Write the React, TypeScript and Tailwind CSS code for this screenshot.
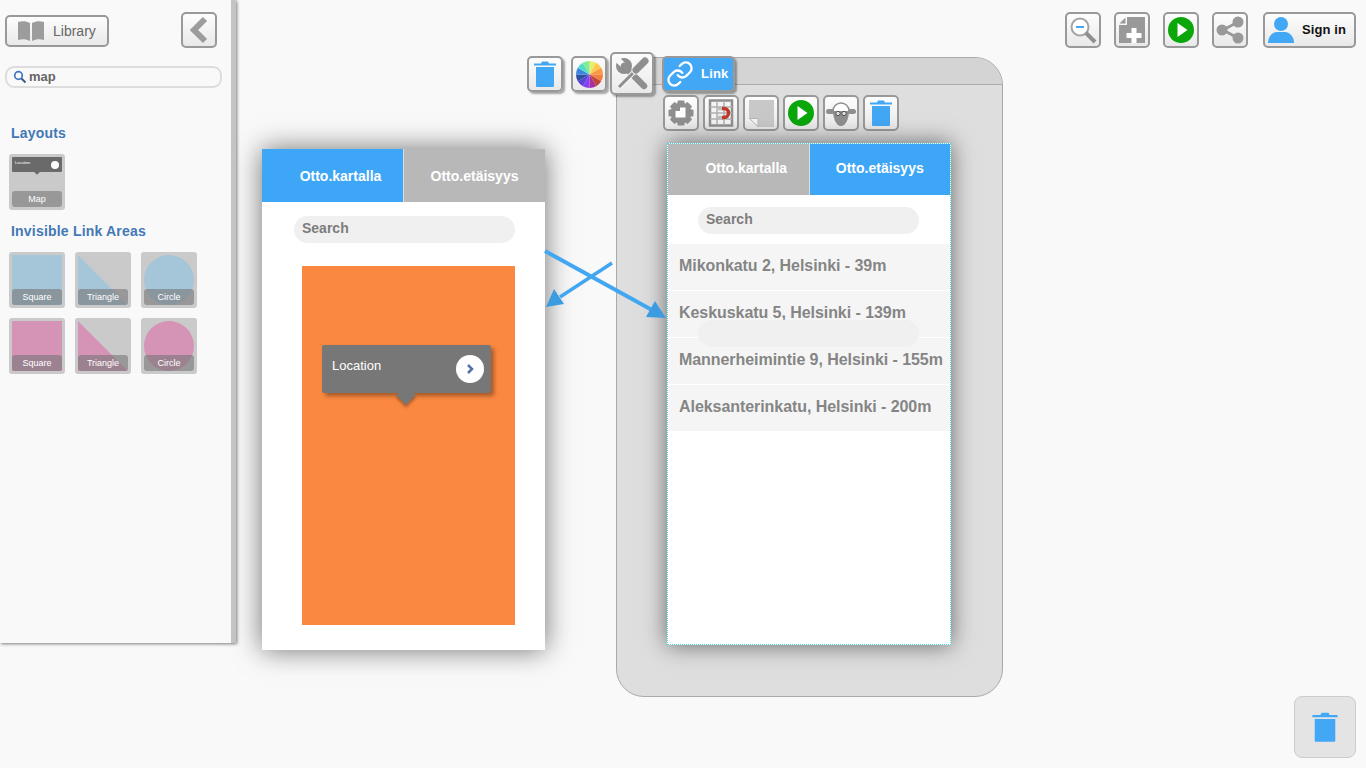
import { Link as LinkIcon } from "lucide-react";
import type { ReactNode } from "react";

const btn =
  "flex items-center justify-center rounded-[5px] border-[2px] border-[#999] bg-gradient-to-b from-[#fdfdfd] to-[#e9e9e9]";

const IconBtn = ({ children, className = "" }: { children: ReactNode; className?: string }) => (
  <div className={`${btn} h-9 w-9 shrink-0 ${className}`}>{children}</div>
);

const TrashIcon = ({ size = 28 }: { size?: number }) => (
  <svg width={size} height={size} viewBox="0 0 28 28">
    <path d="M11 1.5h6l1 2h7v2H3v-2h7z" fill="#42a7f5" />
    <path d="M5 7h18v19a1 1 0 0 1-1 1H6a1 1 0 0 1-1-1z" fill="#42a7f5" />
  </svg>
);

const PlayIcon = () => (
  <svg width="28" height="28" viewBox="0 0 28 28">
    <circle cx="14" cy="14" r="13" fill="#0aa60a" />
    <path d="M10.5 7l10 7-10 7z" fill="#fff" />
  </svg>
);

const WHEEL = ["#e8ee6a", "#ffc850", "#fb9a45", "#f57f3e", "#c0453a", "#a8309a", "#8a3ff0", "#5a44d8", "#2f4fa0", "#3f85e0", "#52dcc8", "#80ee90"];

const ColorWheel = () => (
  <svg width="27" height="27" viewBox="-16 -16 32 32">
    {WHEEL.map((c, i) => {
      const a = ((i - 3) * Math.PI) / 6;
      const b = ((i - 2) * Math.PI) / 6;
      const d = `M0 0L${16 * Math.cos(a)} ${16 * Math.sin(a)}A16 16 0 0 1 ${16 * Math.cos(b)} ${16 * Math.sin(b)}z`;
      return <path key={c} d={d} fill={c} />;
    })}
  </svg>
);

const Tile = ({ label, children }: { label: string; children?: ReactNode }) => (
  <div className="relative h-14 w-14 overflow-hidden rounded-[3px] bg-[#cacaca]">
    {children}
    <div className="absolute bottom-[3px] left-[3px] flex h-4 w-[50px] items-center justify-center rounded-[3px] bg-[#777]/60 pt-[1px] text-[9px] text-white">
      {label}
    </div>
  </div>
);

const ShapeTile = ({ label, color, shape }: { label: string; color: string; shape: "square" | "triangle" | "circle" }) => (
  <Tile label={label}>
    <svg width="56" height="56" viewBox="0 0 56 56">
      {shape === "square" && <rect x="3" y="3" width="50" height="50" fill={color} />}
      {shape === "triangle" && <path d="M3 3L53 53H3z" fill={color} />}
      {shape === "circle" && <circle cx="28" cy="28" r="25" fill={color} />}
    </svg>
  </Tile>
);

const Tabs = ({ active, className }: { active: 0 | 1; className: string }) => (
  <div className={`grid grid-cols-2 gap-[1px] bg-[#ddd] text-[14px] font-bold text-white ${className}`}>
    <div className={`flex items-center justify-center pl-4 ${active === 0 ? "bg-[#3ea6f7]" : "bg-[#b8b8b8]"}`}>Otto.kartalla</div>
    <div className={`flex items-center justify-center ${active === 1 ? "bg-[#3ea6f7]" : "bg-[#b8b8b8]"}`}>Otto.etäisyys</div>
  </div>
);

const SearchPill = ({ label, className = "" }: { label?: string; className?: string }) => (
  <div className={`flex h-[27px] w-[221px] items-center rounded-[14px] bg-[#f0f0f0] pb-[2px] pl-2 text-[14px] font-bold text-[#7d7d7d] ${className}`}>
    {label}
  </div>
);

const PLACES = ["Mikonkatu 2, Helsinki - 39m", "Keskuskatu 5, Helsinki - 139m", "Mannerheimintie 9, Helsinki - 155m", "Aleksanterinkatu, Helsinki - 200m"];

const App = () => {
  return (
    <div className="relative h-[768px] w-[1366px] overflow-hidden bg-[#f9f9f9] font-['Liberation_Sans',Arial,sans-serif]">
      {/* design canvas */}
      <div className="absolute inset-0">
        {/* left screen */}
        <div className="absolute left-[262px] top-[149px] h-[501px] w-[283px] bg-white shadow-[0_0_26px_rgba(0,0,0,0.55)]">
          <Tabs active={0} className="h-[53px] [&>div]:pt-[2px]" />
          <SearchPill label="Search" className="ml-8 mt-[14px]" />
          <div className="relative ml-10 mt-[23px] h-[359px] w-[213px] bg-[#fa8840]">
            <div className="absolute left-5 top-[79px] flex h-12 w-[169px] items-center justify-between rounded-[2px] bg-[#777] pl-[10px] pr-[7px] text-[13px] text-white shadow-[3px_3px_4px_rgba(0,0,0,0.35)]">
              <span className="mb-[6px]">Location</span>
              <div className="flex h-7 w-7 items-center justify-center rounded-full bg-white">
                <svg width="10" height="12" viewBox="0 0 10 12">
                  <path d="M3 2l4 4-4 4" fill="none" stroke="#5470ad" strokeWidth="2.5" />
                </svg>
              </div>
              <div className="absolute left-[77px] top-[43px] h-[14px] w-[14px] rotate-45 bg-[#777] shadow-[2px_2px_3px_rgba(0,0,0,0.3)]" />
            </div>
          </div>
        </div>

        {/* right screen group */}
        <div className="absolute left-[616px] top-[57px] h-[640px] w-[387px] rounded-[28px] border border-[#aaa] bg-[#dedede]">
          <div className="h-[27px] rounded-t-[28px] border-b border-[#aaa] bg-[#d4d4d4]" />
          <div className="ml-[46px] mt-[10px] flex gap-1">
            <IconBtn>
              <svg width="30" height="30" viewBox="0 0 30 30">
                <g fill="#8f8f8f">
                  <circle cx="15" cy="15" r="10.5" />
                  {[0, 45, 90, 135].map((r) => (
                    <rect key={r} x="2.5" y="11.5" width="25" height="7" rx="1" transform={`rotate(${r} 15 15)`} />
                  ))}
                </g>
                <path d="M13.5 9.5h6v10h-10v-6.5z" fill="#fff" />
                <path d="M14 8v5h-5z" fill="#8f8f8f" />
              </svg>
            </IconBtn>
            <IconBtn>
              <svg width="30" height="30" viewBox="0 0 30 30">
                <rect x="4" y="2.5" width="22" height="25" fill="#f4f4f4" stroke="#8f8f8f" strokeWidth="2.5" />
                <path d="M4 9h22M4 15h22M4 21h22M11 3v24M18 3v24" stroke="#b0b0b0" strokeWidth="1.5" />
                <path d="M16 10.5h2a4.5 4.5 0 0 1 0 9h-2" fill="none" stroke="#c0392b" strokeWidth="3.5" />
                <path d="M12 10.5h4M12 19.5h4" stroke="#bdbdbd" strokeWidth="3.5" />
              </svg>
            </IconBtn>
            <IconBtn>
              <svg width="30" height="30" viewBox="0 0 30 30">
                <path d="M3 2h25v27H12l-9-9z" fill="#c8c8c8" />
                <path d="M3.5 20.5h8.5v8z" fill="#f6f6f6" stroke="#b5b5b5" />
              </svg>
            </IconBtn>
            <IconBtn>
              <PlayIcon />
            </IconBtn>
            <IconBtn>
              <svg width="32" height="30" viewBox="0 0 32 30">
                <path d="M8 13a8 8 0 0 1 16 0v2H8z" fill="#fff" stroke="#8f8f8f" strokeWidth="1.5" />
                <rect x="1" y="11" width="8" height="5" rx="2.5" fill="#8f8f8f" />
                <rect x="23" y="11" width="8" height="5" rx="2.5" fill="#8f8f8f" />
                <path d="M8 13h16c0 7-3 15-8 15s-8-8-8-15z" fill="#8f8f8f" />
                <circle cx="13" cy="15.5" r="2.2" fill="#ddd" stroke="#555" />
                <circle cx="19" cy="15.5" r="2.2" fill="#ddd" stroke="#555" />
              </svg>
            </IconBtn>
            <IconBtn>
              <TrashIcon />
            </IconBtn>
          </div>
          <div className="relative ml-[50px] mt-3 h-[502px] w-[284px] border border-dotted border-[#3fe0e0] bg-white shadow-[0_0_22px_rgba(0,0,0,0.55)]">
            <Tabs active={1} className="h-[51px] [&>div]:pb-[3px]" />
            <SearchPill label="Search" className="ml-[30px] mt-3" />
            <div className="mt-[10px] flex flex-col gap-[1px] bg-white">
              {PLACES.map((p) => (
                <div key={p} className="flex h-[46px] items-center whitespace-nowrap bg-[#f5f5f5] pb-[2px] pl-[11px] text-[16px] font-bold tracking-[-0.06px] text-[#858585]">
                  {p}
                </div>
              ))}
            </div>
            <SearchPill className="absolute left-[30px] top-[176px]" />
          </div>
        </div>

        {/* floating toolbar */}
        <IconBtn className="absolute left-[527px] top-[56px] shadow-[2px_2px_2px_rgba(0,0,0,0.35)]">
          <TrashIcon />
        </IconBtn>
        <IconBtn className="absolute left-[571px] top-[56px] shadow-[2px_2px_2px_rgba(0,0,0,0.35)]">
          <ColorWheel />
        </IconBtn>
        <div className={`${btn} absolute left-[610px] top-[52px] h-[43px] w-[44px] shadow-[2px_2px_2px_rgba(0,0,0,0.35)]`}>
          <svg width="36" height="36" viewBox="0 0 36 36">
            <circle cx="10" cy="10" r="8" fill="#8f8f8f" />
            <path d="M9 9L2 2" stroke="#f8f8f8" strokeWidth="6" />
            <path d="M10 10L30 30" stroke="#8f8f8f" strokeWidth="6.5" strokeLinecap="round" />
            <path d="M21 15L5 31" stroke="#f4f4f4" strokeWidth="5" />
            <path d="M21 15L5 31" stroke="#8f8f8f" strokeWidth="3" />
            <path d="M31 5L22 14" stroke="#f4f4f4" strokeWidth="9" strokeLinecap="round" />
            <path d="M31 5L22 14" stroke="#8f8f8f" strokeWidth="7" strokeLinecap="round" />
          </svg>
        </div>
        <div className="absolute left-[662px] top-[56px] flex h-9 w-[73px] items-center gap-[7px] rounded-[5px] border-[2px] border-[#999] bg-[#42a7f5] pl-[2px] text-[13px] font-bold tracking-[0.2px] text-white shadow-[2px_2px_2px_rgba(0,0,0,0.35)]">
          <LinkIcon size={28} strokeWidth={2} color="#fff" />
          Link
        </div>

        {/* link arrows */}
        <svg className="absolute left-[540px] top-[245px]" width="130" height="80" viewBox="0 0 130 80">
          <path d="M5 6L112 65" stroke="#42a7f0" strokeWidth="4" />
          <path d="M126 73l-20-1 9-16z" fill="#3d9be0" />
          <path d="M72 18L20 52" stroke="#42a7f0" strokeWidth="3.5" />
          <path d="M6 62l8-18 10 15z" fill="#3d9be0" />
        </svg>
      </div>

      {/* library panel */}
      <aside className="relative h-[643px] w-[236px] border-r-[5px] border-[#c4c4c4] bg-[#f9f9f9] pt-3 shadow-[1px_1px_3px_rgba(0,0,0,0.5)]">
        <div className="flex items-start justify-between pl-[5px] pr-[14px]">
          <div className={`${btn} mt-[3px] h-8 w-[104px] !justify-start gap-[9px] pl-[11px] text-[14px] text-[#666]`}>
            <svg width="26" height="20" viewBox="0 0 26 20">
              <path d="M0 1c4-1 8-1 12 1v18c-4-2-8-2-12-1zM26 1c-4-1-8-1-12 1v18c4-2 8-2 12-1z" fill="#9c9c9c" />
            </svg>
            Library
          </div>
          <IconBtn>
            <svg width="22" height="28" viewBox="0 0 22 28">
              <path d="M17 3L6 14l11 11" fill="none" stroke="#9c9c9c" strokeWidth="6" />
            </svg>
          </IconBtn>
        </div>
        <div className="ml-[5px] mt-[18px] flex h-[22px] w-[217px] items-center gap-[2px] rounded-[9px] border-[2px] border-[#ddd] pl-[6px] text-[13px] font-bold text-[#666]">
          <svg width="14" height="14" viewBox="0 0 14 14">
            <circle cx="5.5" cy="5.5" r="3.8" fill="none" stroke="#3f78c0" strokeWidth="1.7" />
            <path d="M8.5 8.5l4 4" stroke="#3f5a80" strokeWidth="2" />
          </svg>
          map
        </div>
        <h2 className="ml-[11px] mt-[37px] text-[14px] font-bold leading-4 tracking-[0.2px] text-[#4478b5]">Layouts</h2>
        <div className="ml-[9px] mt-[13px]">
          <Tile label="Map">
            <div className="absolute left-[3px] top-[3px] flex h-[15px] w-[50px] items-center justify-between rounded-[1px] bg-[#6a6a6a] px-[3px] text-[4px] text-white">
              <span className="mb-[3px]">Location</span>
              <div className="h-2 w-2 rounded-full bg-white" />
              <div className="absolute left-[23px] top-[13px] h-[4px] w-[4px] rotate-45 bg-[#6a6a6a]" />
            </div>
          </Tile>
        </div>
        <h2 className="ml-[11px] mt-[13px] text-[14px] font-bold leading-4 tracking-[0.2px] text-[#4478b5]">Invisible Link Areas</h2>
        <div className="ml-[9px] mt-[13px] grid w-fit grid-cols-3 gap-x-[10px] gap-y-[10px]">
          <ShapeTile label="Square" color="#a5c5d8" shape="square" />
          <ShapeTile label="Triangle" color="#a5c5d8" shape="triangle" />
          <ShapeTile label="Circle" color="#a5c5d8" shape="circle" />
          <ShapeTile label="Square" color="#d593b6" shape="square" />
          <ShapeTile label="Triangle" color="#d593b6" shape="triangle" />
          <ShapeTile label="Circle" color="#d593b6" shape="circle" />
        </div>
      </aside>

      {/* top right tools */}
      <div className="absolute right-[10px] top-3 flex">
        <IconBtn className="mr-[13px]">
          <svg width="30" height="30" viewBox="0 0 30 30">
            <circle cx="12" cy="12" r="8.5" fill="#fff" stroke="#a5a5a5" strokeWidth="2" />
            <path d="M8 12h8" stroke="#42a7f5" strokeWidth="2" />
            <path d="M18 18l9 9" stroke="#8f8f8f" strokeWidth="4" />
          </svg>
        </IconBtn>
        <IconBtn className="mr-[13px]">
          <svg width="30" height="30" viewBox="0 0 30 30">
            <path d="M10 2H28V28H2V10H10z" fill="#999" />
            <path d="M8.5 2.5V8.5H2.5z" fill="#999" />
            <path d="M14.5 13h5v5h5v5h-5v5h-5v-5h-5v-5h5z" fill="#fff" />
          </svg>
        </IconBtn>
        <IconBtn className="mr-[13px]">
          <PlayIcon />
        </IconBtn>
        <IconBtn className="mr-[15px]">
          <svg width="30" height="30" viewBox="0 0 30 30">
            <path d="M8 15L23 7M8 15l15 8" stroke="#999" strokeWidth="3" />
            <circle cx="7" cy="15" r="5.5" fill="#999" />
            <circle cx="23" cy="7" r="5.5" fill="#999" />
            <circle cx="23" cy="23" r="5.5" fill="#999" />
          </svg>
        </IconBtn>
        <div className={`${btn} h-9 w-[93px] !justify-start gap-[6px] pl-[1px] text-[13px] font-bold tracking-[0.1px] text-[#111]`}>
          <svg width="30" height="30" viewBox="0 0 30 30">
            <circle cx="15" cy="9" r="7" fill="#42a7f5" />
            <path d="M2 28c0-7 5-11 9-11h8c4 0 9 4 9 11z" fill="#42a7f5" />
          </svg>
          Sign in
        </div>
      </div>

      {/* drop to delete */}
      <div className="absolute bottom-[10px] right-[10px] flex h-[62px] w-[62px] items-center justify-center rounded-[8px] border border-[#ccc] bg-[#e4e4e4]">
        <TrashIcon size={32} />
      </div>
    </div>
  );
};

export default App;
